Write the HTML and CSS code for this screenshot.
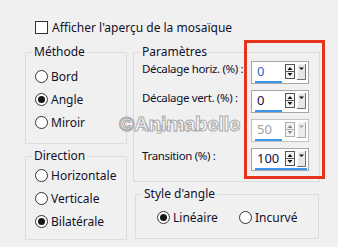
FILE: index.html
```html
<!DOCTYPE html>
<html lang="fr">
<head>
<meta charset="UTF-8" />
<title>Mosaïque - paramètres</title>
<link rel="stylesheet" href="styles.css">
</head>
<body>

<div class="dialog">
  <label class="check"><span class="box"></span>Afficher l'aperçu de la mosaïque</label>

  <div class="columns">
    <div class="col left">
      <fieldset class="group methode">
        <legend>Méthode</legend>
        <div class="radios">
          <div class="radio"><span class="dot"></span>Bord</div>
          <div class="radio on"><span class="dot"></span>Angle</div>
          <div class="radio"><span class="dot"></span>Miroir</div>
        </div>
      </fieldset>

      <fieldset class="group direction">
        <legend>Direction</legend>
        <div class="radios">
          <div class="radio"><span class="dot"></span>Horizontale</div>
          <div class="radio"><span class="dot"></span>Verticale</div>
          <div class="radio on"><span class="dot"></span>Bilatérale</div>
        </div>
      </fieldset>
    </div>

    <div class="col right">
      <fieldset class="group params">
        <legend>Paramètres</legend>
        <div class="rows">
          <div class="row">
            <span class="lbl">Décalage horiz. (%) :</span>
            <div class="spin focus">
              <div class="spin-row">
                <span class="val">0</span>
                <svg width="21" height="17" viewBox="0 0 21 17">
                  <rect x="0.5" y="1.5" width="9" height="14" fill="#f6f6f6" stroke="#555"/>
                  <line x1="0.5" y1="8.5" x2="9.5" y2="8.5" stroke="#555"/>
                  <path d="M2.5 7h5l-2.5-3z" fill="#111"/>
                  <path d="M2.5 10h5l-2.5 3z" fill="#111"/>
                  <rect x="12" y="1" width="9" height="16" fill="#e6e6e6"/>
                  <path d="M12.5 16.5v-15.5h8" fill="none" stroke="#fff"/>
                  <path d="M12 16.5h8.5v-15.5" fill="none" stroke="#6e6e6e"/>
                  <path d="M14 4.5h5l-2.5 2.5z" fill="#111"/>
                </svg>
              </div>
              <div class="line"></div>
            </div>
          </div>

          <div class="row">
            <span class="lbl">Décalage vert. (%) :</span>
            <div class="spin">
              <div class="spin-row">
                <span class="val">0</span>
                <svg width="21" height="17" viewBox="0 0 21 17">
                  <rect x="0.5" y="1.5" width="9" height="14" fill="#f6f6f6" stroke="#555"/>
                  <line x1="0.5" y1="8.5" x2="9.5" y2="8.5" stroke="#555"/>
                  <path d="M2.5 7h5l-2.5-3z" fill="#111"/>
                  <path d="M2.5 10h5l-2.5 3z" fill="#111"/>
                  <rect x="12" y="1" width="9" height="16" fill="#e6e6e6"/>
                  <path d="M12.5 16.5v-15.5h8" fill="none" stroke="#fff"/>
                  <path d="M12 16.5h8.5v-15.5" fill="none" stroke="#6e6e6e"/>
                  <path d="M14 4.5h5l-2.5 2.5z" fill="#111"/>
                </svg>
              </div>
              <div class="line"></div>
            </div>
          </div>

          <div class="row">
            <span class="lbl off">Angle (%) :</span>
            <div class="spin disabled">
              <div class="spin-row">
                <span class="val">50</span>
                <svg width="21" height="17" viewBox="0 0 21 17">
                  <rect x="0.5" y="1.5" width="9" height="14" fill="#f4f4f4" stroke="#adadad"/>
                  <line x1="0.5" y1="8.5" x2="9.5" y2="8.5" stroke="#adadad"/>
                  <path d="M2.5 7h5l-2.5-3z" fill="#8a8a8a"/>
                  <path d="M2.5 10h5l-2.5 3z" fill="#8a8a8a"/>
                  <rect x="12" y="1" width="9" height="16" fill="#ececec"/>
                  <path d="M12.5 16.5v-15.5h8" fill="none" stroke="#fff"/>
                  <path d="M12 16.5h8.5v-15.5" fill="none" stroke="#a8a8a8"/>
                  <path d="M14 4.5h5l-2.5 2.5z" fill="#a0a0a0"/>
                </svg>
              </div>
              <div class="line"></div>
            </div>
          </div>

          <div class="row">
            <span class="lbl">Transition (%) :</span>
            <div class="spin">
              <div class="spin-row">
                <span class="val">100</span>
                <svg width="21" height="17" viewBox="0 0 21 17">
                  <rect x="0.5" y="1.5" width="9" height="14" fill="#f6f6f6" stroke="#555"/>
                  <line x1="0.5" y1="8.5" x2="9.5" y2="8.5" stroke="#555"/>
                  <path d="M2.5 7h5l-2.5-3z" fill="#111"/>
                  <path d="M2.5 10h5l-2.5 3z" fill="#111"/>
                  <rect x="12" y="1" width="9" height="16" fill="#e6e6e6"/>
                  <path d="M12.5 16.5v-15.5h8" fill="none" stroke="#fff"/>
                  <path d="M12 16.5h8.5v-15.5" fill="none" stroke="#6e6e6e"/>
                  <path d="M14 4.5h5l-2.5 2.5z" fill="#111"/>
                </svg>
              </div>
              <div class="line full"></div>
            </div>
          </div>
        </div>
      </fieldset>

      <fieldset class="group style">
        <legend>Style d'angle</legend>
        <div class="inline-radios">
          <div class="radio on first"><span class="dot"></span>Linéaire</div>
          <div class="radio"><span class="dot"></span>Incurvé</div>
        </div>
      </fieldset>
    </div>
  </div>

  <div class="highlight"></div>
  <div class="watermark">©Animabelle</div>
</div>

</body>
</html>
```

FILE: styles.css
```css
/* Windows-style dialog, 9pt UI font */
body {
  margin: 0;
  background: #f0f0f0;
  font-family: 'Noto Sans', 'Liberation Sans', sans-serif;
  font-size: 12px;
  color: #10102a;
}

.dialog {
  position: relative;
  width: 338px;
  height: 247px;
  padding: 21px 0 0 25px;
  box-sizing: border-box;
}

.check {
  display: flex;
  align-items: center;
  gap: 4px;
  margin-left: 10px;
  height: 13px;
  line-height: 14px;
  white-space: nowrap;
}

.check .box {
  width: 13px;
  height: 13px;
  box-sizing: border-box;
  border: 1px solid #333;
  background: #fff;
}

.columns {
  display: flex;
  gap: 6px;
  margin-top: 11px;
}

.col {
  display: flex;
  flex-direction: column;
  gap: 5px;
}

.left { width: 102px; }
.right { width: 187px; }

/* group boxes */
.group {
  margin: 0;
  padding: 0;
  min-width: 0;
  border: 1px solid #dcdcdc;
  box-sizing: border-box;
}

.group legend {
  padding: 0 2px;
  margin-left: 6px;
  line-height: 14px;
}

.methode { height: 99px; }
.direction { height: 91px; }
.params { height: 137px; }
.style {
  height: 52px;
  width: 184px;
  margin-left: 2px;
}

/* radio buttons */
.radios {
  display: flex;
  flex-direction: column;
  padding: 6px 0 0 9px;
}

.direction .radios { padding-top: 1px; }

.radio {
  display: flex;
  align-items: center;
  gap: 3px;
  height: 23px;
  white-space: nowrap;
}

.dot {
  width: 13px;
  height: 13px;
  border-radius: 50%;
  border: 1px solid #333;
  background: #fff;
  box-sizing: border-box;
  display: flex;
  align-items: center;
  justify-content: center;
}

.radio.on .dot::after {
  content: "";
  width: 7px;
  height: 7px;
  border-radius: 50%;
  background: #161616;
}

.inline-radios {
  display: flex;
  padding: 5px 0 0 21px;
}

.inline-radios .first { width: 82px; }

/* parameter rows */
.rows {
  display: flex;
  flex-direction: column;
  gap: 6px;
  padding: 2px 0 0 8px;
}

.row {
  display: flex;
  align-items: flex-start;
}

.lbl {
  width: 109px;
  font-size: 11.5px;
  line-height: 14px;
  padding-top: 1px;
  white-space: nowrap;
  letter-spacing: -0.35px;
}

.lbl.off { color: #b4b4b4; }

.spin {
  width: 58px;
  height: 23px;
  box-sizing: border-box;
  border: 1px solid #a6a6a6;
  background: #fff;
  padding: 1px 0 0 3px;
}

.spin-row {
  display: flex;
  height: 17px;
}

.spin .val {
  width: 27px;
  padding-left: 2px;
  box-sizing: border-box;
  font-size: 13px;
  line-height: 17px;
  color: #101048;
}

.spin svg {
  margin-left: 3px;
  display: block;
}

.spin .line {
  width: 27px;
  height: 2px;
  margin-top: 1px;
  background: #3b95ec;
}

.spin .line.full { width: 52px; }

.spin.focus .val { color: #2a64c8; }

.spin.disabled {
  border-color: #c4c4c4;
}

.spin.disabled .val { color: #a2a2a2; }

/* overlays */
.highlight {
  position: absolute;
  left: 244px;
  top: 40px;
  width: 81px;
  height: 139px;
  box-sizing: border-box;
  border: 3px solid #e5331c;
}

.watermark {
  position: absolute;
  left: 119px;
  top: 112px;
  font-family: 'Liberation Sans', sans-serif;
  font-size: 21px;
  font-weight: bold;
  color: rgba(250, 250, 250, 0.8);
  -webkit-text-stroke: 1px rgba(150, 150, 150, 0.8);
  letter-spacing: -0.6px;
}
```
